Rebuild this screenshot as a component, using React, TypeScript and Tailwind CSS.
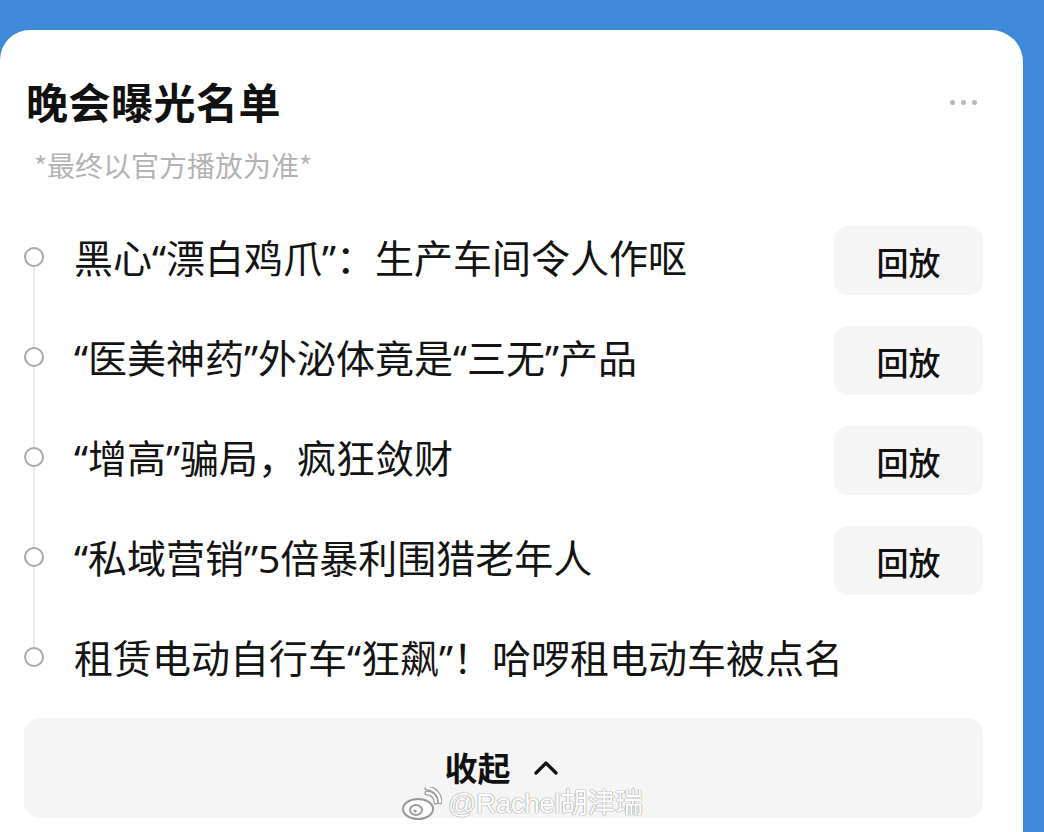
import React from "react";

const items = [
  { text: "黑心“漂白鸡爪”：生产车间令人作呕", btn: true },
  { text: "“医美神药”外泌体竟是“三无”产品", btn: true },
  { text: "“增高”骗局，疯狂敛财", btn: true },
  { text: "“私域营销”5倍暴利围猎老年人", btn: true },
  { text: "租赁电动自行车“狂飙”！哈啰租电动车被点名", btn: false },
];

const font = { fontFamily: '"Noto Sans CJK SC", "Noto Sans", sans-serif' };
const itemFont = { fontFamily: '"Noto Sans", "Noto Sans CJK SC", sans-serif' };

export default function App() {
  return (
    <div className="w-[1044px] h-[832px] bg-[#3e8ad9] overflow-hidden pt-[30px]" style={font}>
      <div className="relative w-[1023px] h-[830px] bg-white rounded-tr-[32px] rounded-tl-[30px] pl-[24px] pr-[40px] pt-[50px] flex flex-col">
        <div className="flex items-center justify-between h-[46px] -mt-[2px]">
          <div className="pl-[2px] text-[42px] leading-[46px] font-bold text-[#111] tracking-[0.5px]">晚会曝光名单</div>
          <div className="flex gap-[6px] mr-[6px] mt-[2px]">
            <span className="w-[5px] h-[5px] rounded-full bg-[#b8b8b8]" />
            <span className="w-[5px] h-[5px] rounded-full bg-[#b8b8b8]" />
            <span className="w-[5px] h-[5px] rounded-full bg-[#b8b8b8]" />
          </div>
        </div>
        <div className="mt-[22px] pl-[10px] text-[28px] leading-[38px] text-[#b3b3b3]">*最终以官方播放为准*</div>
        <div className="mt-[22px] flex flex-col">
          {items.map((it, i) => (
            <div key={i} className="flex h-[100px] items-stretch">
              <div className="w-[20px] flex flex-col items-center">
                <div className={`flex-1 w-[2px] ${i === 0 ? "bg-transparent" : "bg-[#ebebeb]"}`} />
                <div className="w-[20px] h-[20px] rounded-full border-[2.5px] border-[#a8a8a8] bg-white shrink-0" />
                <div className={`flex-1 w-[2px] mb-[-2px] ${i === items.length - 1 ? "bg-transparent" : "bg-[#ebebeb]"}`} />
              </div>
              <div className="flex-1 flex items-center justify-between pl-[30px]">
                <div className="text-[39px] leading-[44px] text-[#141414] mt-[4px]" style={itemFont}>{it.text}</div>
                {it.btn && (
                  <div className="w-[149px] h-[69px] rounded-[14px] bg-[#f5f5f5] flex items-center justify-center text-[32px] font-medium text-[#111] mt-[9px]">
                    回放
                  </div>
                )}
              </div>
            </div>
          ))}
        </div>
        <div className="mt-[12px] h-[100px] rounded-[16px] bg-[#f5f5f5] flex items-center justify-center gap-[22px]">
          <span className="text-[33px] font-bold text-[#111] -ml-[4px]">收起</span>
          <svg width="26" height="16" viewBox="0 0 26 16" fill="none">
            <path d="M3 13 L13 3 L23 13" stroke="#111" strokeWidth="3.2" strokeLinecap="round" strokeLinejoin="round" />
          </svg>
        </div>
        <div className="absolute left-[400px] top-[757px] flex items-center gap-[6px] pointer-events-none">
          <svg width="42" height="34" viewBox="0 0 40 34">
            <ellipse cx="17" cy="22" rx="15" ry="10" fill="white" stroke="#9a9a9a" strokeWidth="2" />
            <ellipse cx="15" cy="23" rx="6" ry="5" fill="white" stroke="#9a9a9a" strokeWidth="2" />
            <circle cx="14" cy="24" r="1.6" fill="#9a9a9a" />
            <path d="M26 6 A9 9 0 0 1 35 15" stroke="#9a9a9a" strokeWidth="5" fill="none" strokeLinecap="round" />
            <path d="M26 6 A9 9 0 0 1 35 15" stroke="white" strokeWidth="2.5" fill="none" strokeLinecap="round" />
            <path d="M26 1 A14 14 0 0 1 39 15" stroke="#9a9a9a" strokeWidth="5" fill="none" strokeLinecap="round" />
            <path d="M26 1 A14 14 0 0 1 39 15" stroke="white" strokeWidth="2.5" fill="none" strokeLinecap="round" />
          </svg>
          <span
            className="text-[28px] leading-[32px] text-white tracking-[-0.5px]"
            style={{ fontFamily: '"Liberation Sans", "Noto Sans CJK SC", sans-serif', textShadow: "0 0 1px #999, 0 0 1px #999, 0 0 1px #999" }}
          >
            @Rachel胡津瑞
          </span>
        </div>
      </div>
    </div>
  );
}
